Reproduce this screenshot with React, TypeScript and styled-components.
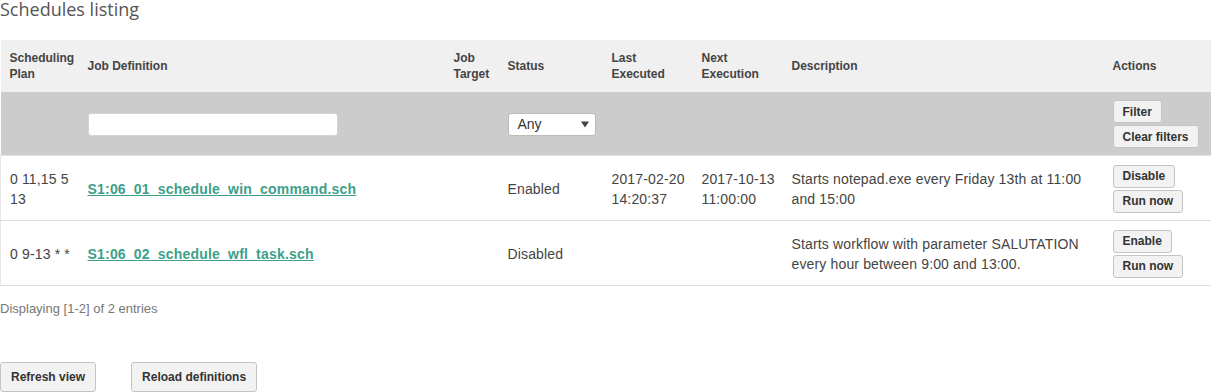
import React from "react";
import styled, { createGlobalStyle } from "styled-components";

const GlobalStyle = createGlobalStyle`
  body {
    margin: 0;
    background: #fff;
    font-family: "Liberation Sans", Arial, sans-serif;
    color: #444;
  }
`;

interface Schedule {
  plan: string;
  job: string;
  target: string;
  status: string;
  last: string[];
  next: string[];
  description: string;
  toggle: string;
}

const schedules: Schedule[] = [
  {
    plan: "0 11,15 5 13",
    job: "S1:06_01_schedule_win_command.sch",
    target: "",
    status: "Enabled",
    last: ["2017-02-20", "14:20:37"],
    next: ["2017-10-13", "11:00:00"],
    description: "Starts notepad.exe every Friday 13th at 11:00 and 15:00",
    toggle: "Disable",
  },
  {
    plan: "0 9-13 * *",
    job: "S1:06_02_schedule_wfl_task.sch",
    target: "",
    status: "Disabled",
    last: [],
    next: [],
    description:
      "Starts workflow with parameter SALUTATION every hour between 9:00 and 13:00.",
    toggle: "Enable",
  },
];

const colWidths = [78, 366, 54, 104, 90, 90, 321, 108];

export default function App() {
  return (
    <>
      <GlobalStyle />
      <Page>
        <Title>Schedules listing</Title>
        <Table>
          <colgroup>
            {colWidths.map((w, i) => (
              <col key={i} style={{ width: w }} />
            ))}
          </colgroup>
          <thead>
            <HeadRow>
              <Th>Scheduling Plan</Th>
              <Th>Job Definition</Th>
              <Th>Job Target</Th>
              <Th>Status</Th>
              <Th>Last Executed</Th>
              <Th>Next Execution</Th>
              <Th>Description</Th>
              <Th>Actions</Th>
            </HeadRow>
            <FilterRow>
              <FilterCell />
              <FilterCell>
                <TextInput type="text" />
              </FilterCell>
              <FilterCell />
              <FilterCell>
                <Select>
                  <span>Any</span>
                  <Caret viewBox="0 0 8 8">
                    <path d="M0 1.5h8L4 7.5z" fill="#444" />
                  </Caret>
                </Select>
              </FilterCell>
              <FilterCell />
              <FilterCell />
              <FilterCell />
              <FilterCell>
                <ButtonStack>
                  <SmallButton>Filter</SmallButton>
                  <SmallButton>Clear filters</SmallButton>
                </ButtonStack>
              </FilterCell>
            </FilterRow>
          </thead>
          <tbody>
            {schedules.map((s) => (
              <BodyRow key={s.job}>
                <Td>{s.plan}</Td>
                <Td>
                  <JobLink href="#">{s.job}</JobLink>
                </Td>
                <Td>{s.target}</Td>
                <Td>{s.status}</Td>
                <Td>
                  {s.last.map((l) => (
                    <div key={l}>{l}</div>
                  ))}
                </Td>
                <Td>
                  {s.next.map((l) => (
                    <div key={l}>{l}</div>
                  ))}
                </Td>
                <Td>{s.description}</Td>
                <Td>
                  <ButtonStack>
                    <SmallButton>{s.toggle}</SmallButton>
                    <SmallButton>Run now</SmallButton>
                  </ButtonStack>
                </Td>
              </BodyRow>
            ))}
          </tbody>
        </Table>
        <Summary>Displaying [1-2] of 2 entries</Summary>
        <Footer>
          <BigButton>Refresh view</BigButton>
          <BigButton>Reload definitions</BigButton>
        </Footer>
      </Page>
    </>
  );
}

const Page = styled.div`
  width: 1211px;
`;

const Title = styled.h2`
  margin: 0;
  height: 40px;
  font-family: "Open Sans", sans-serif;
  font-weight: 400;
  font-size: 18px;
  line-height: 18px;
  color: #555;
`;

const Table = styled.table`
  width: 1211px;
  table-layout: fixed;
  border-collapse: collapse;
`;

const HeadRow = styled.tr`
  background: #f0f0f0;
  height: 52px;
`;

const Th = styled.th`
  text-align: left;
  vertical-align: middle;
  font-size: 12px;
  line-height: 16px;
  font-weight: bold;
  color: #444;
  padding: 0 4px 0 9px;
`;

const FilterRow = styled.tr`
  background: #cccccc;
  height: 63px;
  border-bottom: 1px solid #e2e2e2;
`;

const FilterCell = styled.td`
  padding: 2px 4px 0 9px;
  vertical-align: middle;
`;

const TextInput = styled.input`
  box-sizing: border-box;
  display: block;
  width: 250px;
  height: 23px;
  border: 1px solid #d4d4d4;
  border-radius: 3px;
  background: #fff;
  outline: none;
`;

const Select = styled.div`
  box-sizing: border-box;
  width: 88px;
  height: 23px;
  display: flex;
  align-items: center;
  justify-content: space-between;
  padding: 0 6px 0 9px;
  border: 1px solid #bbb;
  border-radius: 3px;
  background: #fff;
  font-size: 14px;
  color: #333;
`;

const Caret = styled.svg`
  width: 8px;
  height: 8px;
`;

const BodyRow = styled.tr`
  height: 65px;
  border-bottom: 1px solid #dddddd;
  border-left: 1px solid #e6e6e6;
  border-right: 1px solid #e6e6e6;
`;

const Td = styled.td`
  padding: 2px 4px 0 9px;
  vertical-align: middle;
  font-size: 14px;
  line-height: 20px;
  letter-spacing: 0.15px;
  color: #444;
`;

const JobLink = styled.a`
  color: #3d9f89;
  font-weight: bold;
  letter-spacing: 0.2px;
  text-decoration: underline;
`;

const ButtonStack = styled.div`
  display: flex;
  flex-direction: column;
  align-items: flex-start;
  gap: 2px;
`;

const SmallButton = styled.button`
  box-sizing: border-box;
  height: 23px;
  padding: 0 9px;
  font-family: "Liberation Sans", Arial, sans-serif;
  font-size: 12px;
  font-weight: bold;
  color: #333;
  background: #f2f2f2;
  border: 1px solid #c4c4c4;
  border-radius: 3px;
`;

const Summary = styled.div`
  margin-top: 15px;
  font-size: 13px;
  line-height: 16px;
  color: #777;
`;

const Footer = styled.div`
  margin-top: 45px;
  display: flex;
  gap: 35px;
`;

const BigButton = styled.button`
  box-sizing: border-box;
  height: 30px;
  padding: 0 10px;
  font-family: "Liberation Sans", Arial, sans-serif;
  font-size: 12px;
  font-weight: bold;
  color: #333;
  background: #f2f2f2;
  border: 1px solid #c4c4c4;
  border-radius: 3px;
`;
